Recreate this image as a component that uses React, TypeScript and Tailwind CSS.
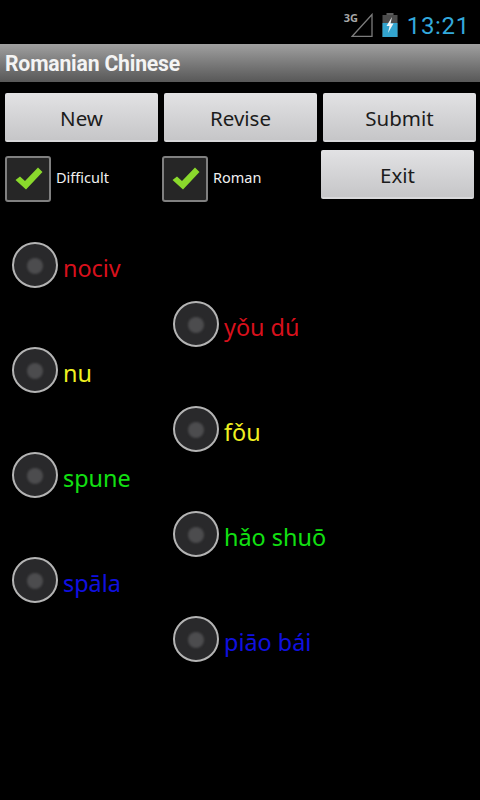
import React from 'react';

const font = { sans: "font-['Noto_Sans','Open_Sans',sans-serif]" };

const words = [
  { text: 'nociv', color: 'text-[#d8101c]', right: false },
  { text: 'yǒu dú', color: 'text-[#d8101c]', right: true },
  { text: 'nu', color: 'text-[#f0f020]', right: false },
  { text: 'fǒu', color: 'text-[#f0f020]', right: true },
  { text: 'spune', color: 'text-[#12e012]', right: false },
  { text: 'hǎo shuō', color: 'text-[#12e012]', right: true },
  { text: 'spāla', color: 'text-[#1010e0]', right: false },
  { text: 'piāo bái', color: 'text-[#1010e0]', right: true },
];

const StatusBar = () => (
  <div className="h-[44px] flex items-start justify-end pr-[10px] pt-[13px] bg-black">
    <div className="relative w-[22px] h-[24px] mr-[9px]">
      <svg viewBox="0 0 22 24" className="w-full h-full" fill="none">
        <path d="M1 23.5 L21 1.5 V23.5 Z" stroke="#7c7c7c" strokeWidth="1.3" />
      </svg>
      <span className="absolute left-[-7px] top-[-2px] text-[11px] leading-[14px] font-bold text-[#a8a8a8] font-['Noto_Sans',sans-serif]">3G</span>
    </div>
    <svg viewBox="0 0 16 24" className="w-[16px] h-[24px] mr-[9px]">
      <rect x="4.5" y="0" width="7" height="3" fill="#5c5c5c" />
      <rect x="0.5" y="2" width="15" height="22" fill="#4c4c4c" />
      <rect x="0.5" y="10" width="15" height="14" fill="#33a5cf" />
      <path d="M10 4 L4.5 13 H7.5 L6 20 L11.5 10.5 H8.5 Z" fill="#f2f6f8" />
    </svg>
    <span className="text-[24px] leading-[26px] text-[#33a9dc] font-['Roboto',sans-serif] tracking-[0.7px]">13:21</span>
  </div>
);

const TitleBar = () => (
  <div className="h-[38px] flex items-center pl-[5px] pt-[2px] bg-gradient-to-b from-[#a0a0a0] to-[#585858]">
    <span className="text-[21.2px] font-bold leading-none text-[#f4f4f4] tracking-[-0.2px] font-['Roboto',sans-serif]">Romanian Chinese</span>
  </div>
);

const AndroidButton = ({ label, className }: { label: string; className: string }) => (
  <div
    className={`w-[153px] h-[49px] pt-[3px] rounded-[2px] flex items-center justify-center bg-gradient-to-b from-[#e2e2e4] to-[#c6c6c8] border-b-2 border-[#d8d8da] text-[20.5px] text-[#1c1c1c] ${font.sans} ${className}`}
  >
    {label}
  </div>
);

const CheckBox = ({ label, className }: { label: string; className: string }) => (
  <div className={`flex items-center ${className}`}>
    <div className="w-[46px] h-[46px] rounded-[3px] border-2 border-[#808080] bg-[#262626] flex items-center justify-center">
      <svg viewBox="0 0 30 24" className="w-[30px] h-[24px]">
        <path d="M2.5 13 L7 9.5 L12 14 L25 0.5 L29.5 5 L13 22.5 Z" fill="#8ad92c" />
      </svg>
    </div>
    <span className={`ml-[5px] mt-[-2px] text-[14.5px] text-[#f0f0f0] ${font.sans}`}>{label}</span>
  </div>
);

const Radio = () => (
  <div className="w-[46px] h-[46px] shrink-0 rounded-full border-2 border-[#b4b4b4] bg-[#29292b] flex items-center justify-center">
    <div className="w-[16px] h-[16px] rounded-full bg-[#4c4c4e] blur-[1px] mt-[1px]" />
  </div>
);

export default function App() {
  return (
    <div className="w-[480px] h-[800px] overflow-hidden bg-black">
      <StatusBar />
      <TitleBar />

      <div className="flex gap-[6px] pl-[5px] mt-[11px]">
        <AndroidButton label="New" className="" />
        <AndroidButton label="Revise" className="" />
        <AndroidButton label="Submit" className="" />
      </div>

      <div className="flex items-start h-[49px] mt-[8px]">
        <CheckBox label="Difficult" className="w-[157px] pl-[5px] mt-[6px]" />
        <CheckBox label="Roman" className="w-[159px] pl-[5px] mt-[6px]" />
        <AndroidButton label="Exit" className="ml-[5px]" />
      </div>

      <div className="mt-[43px] flex flex-col">
        {words.map((word) => (
          <div
            key={word.text}
            className={`flex items-center ${word.right ? 'ml-[173px] mt-[13px]' : 'ml-[12px]'}`}
          >
            <Radio />
            <span className={`ml-[5px] mt-[8px] text-[23.4px] leading-none ${word.color} ${font.sans}`}>{word.text}</span>
          </div>
        ))}
      </div>
    </div>
  );
}
